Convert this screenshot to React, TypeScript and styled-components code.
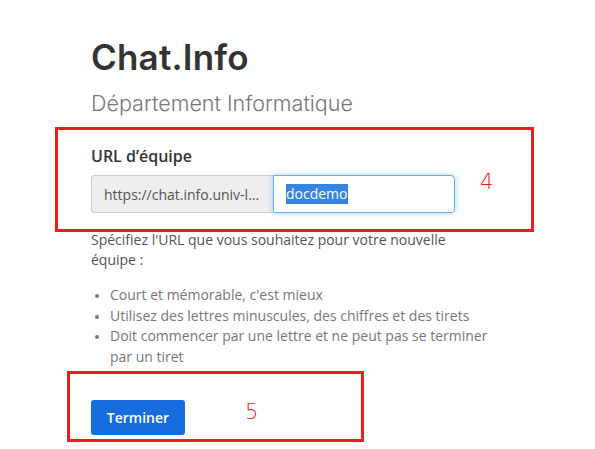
import React from "react";
import styled, { createGlobalStyle } from "styled-components";

const Global = createGlobalStyle`
  html, body { margin: 0; padding: 0; background: #fff; }
  body { font-family: "Open Sans", "Liberation Sans", sans-serif; color: #333; }
  ::selection { background: #3584e4; color: #fff; }
`;

const Page = styled.div`
  position: relative;
  width: 595px;
  height: 449px;
  overflow: hidden;
  box-sizing: border-box;
  padding: 33px 0 0 91px;
`;

const Column = styled.div`
  width: 400px;
  display: flex;
  flex-direction: column;
`;

const Title = styled.h1`
  margin: 0;
  font-family: Inter, "Open Sans", sans-serif;
  font-weight: 600;
  font-size: 35px;
  line-height: 48px;
  color: #333;
  letter-spacing: 0.2px;
`;

const Subtitle = styled.h2`
  margin: 8px 0 0;
  font-family: Inter, "Open Sans", sans-serif;
  font-weight: 300;
  font-size: 21.5px;
  line-height: 28px;
  color: #777;
`;

const Label = styled.label`
  display: block;
  margin-top: 28px;
  font-weight: 600;
  font-size: 16px;
  line-height: 22px;
  color: #333;
`;

const InputGroup = styled.div`
  display: flex;
  width: 364px;
  height: 38px;
  margin-top: 8px;
`;

const Addon = styled.span`
  flex: 0 0 182px;
  box-sizing: border-box;
  display: flex;
  align-items: center;
  padding: 0 12px;
  background: #eee;
  border: 1px solid #ccc;
  border-right: none;
  border-radius: 4px 0 0 4px;
  font-size: 14px;
  color: #555;
  white-space: nowrap;
  overflow: hidden;
`;

const Field = styled.div`
  flex: 1;
  box-sizing: border-box;
  display: flex;
  align-items: center;
  padding: 0 12px;
  border: 1px solid #66afe9;
  border-radius: 0 4px 4px 0;
  box-shadow: 0 0 6px rgba(102, 175, 233, 0.55);
  font-size: 14px;
  color: #555;
`;

const Selected = styled.span`
  background: #3584e4;
  color: #fff;
  line-height: 20px;
`;

const Help = styled.p`
  margin: 17px 0 0;
  font-size: 14px;
  line-height: 20px;
  color: #555;
`;

const List = styled.ul`
  margin: 15px 0 0;
  padding-left: 19px;
  font-size: 14px;
  line-height: 20.5px;
  color: #777;
  li::marker { font-size: 11px; }
`;

const Button = styled.button`
  margin-top: 33px;
  width: 94px;
  height: 35px;
  border: none;
  border-radius: 3px;
  background: #166de0;
  color: #fff;
  font-family: "Open Sans", sans-serif;
  font-weight: 600;
  font-size: 14px;
  align-self: flex-start;
  padding: 0;
`;

const Mark = styled.div<{ $x: number; $y: number; $w: number; $h: number }>`
  position: absolute;
  left: ${(p) => p.$x}px;
  top: ${(p) => p.$y}px;
  width: ${(p) => p.$w}px;
  height: ${(p) => p.$h}px;
  box-sizing: border-box;
  border: 3px solid #ee1c1c;
  pointer-events: none;
`;

const Num = styled.span<{ $x: number; $y: number }>`
  position: absolute;
  left: ${(p) => p.$x}px;
  top: ${(p) => p.$y}px;
  font-family: "DejaVu Sans", sans-serif;
  font-weight: 200;
  font-size: 21px;
  line-height: 20px;
  color: #ee1c1c;
`;

export default function App() {
  return (
    <>
      <Global />
      <Page>
        <Column>
          <Title>Chat.Info</Title>
          <Subtitle>Département Informatique</Subtitle>
          <Label>URL d’équipe</Label>
          <InputGroup>
            <Addon>https://chat.info.univ-l...</Addon>
            <Field>
              <Selected>docdemo</Selected>
            </Field>
          </InputGroup>
          <Help>Spécifiez l'URL que vous souhaitez pour votre nouvelle équipe :</Help>
          <List>
            <li>Court et mémorable, c'est mieux</li>
            <li>Utilisez des lettres minuscules, des chiffres et des tirets</li>
            <li>Doit commencer par une lettre et ne peut pas se terminer par un tiret</li>
          </List>
          <Button>Terminer</Button>
        </Column>
        <Mark $x={55} $y={127} $w={479} $h={105} />
        <Num $x={480} $y={172}>4</Num>
        <Mark $x={67} $y={371} $w={297} $h={71} />
        <Num $x={245} $y={402}>5</Num>
      </Page>
    </>
  );
}
